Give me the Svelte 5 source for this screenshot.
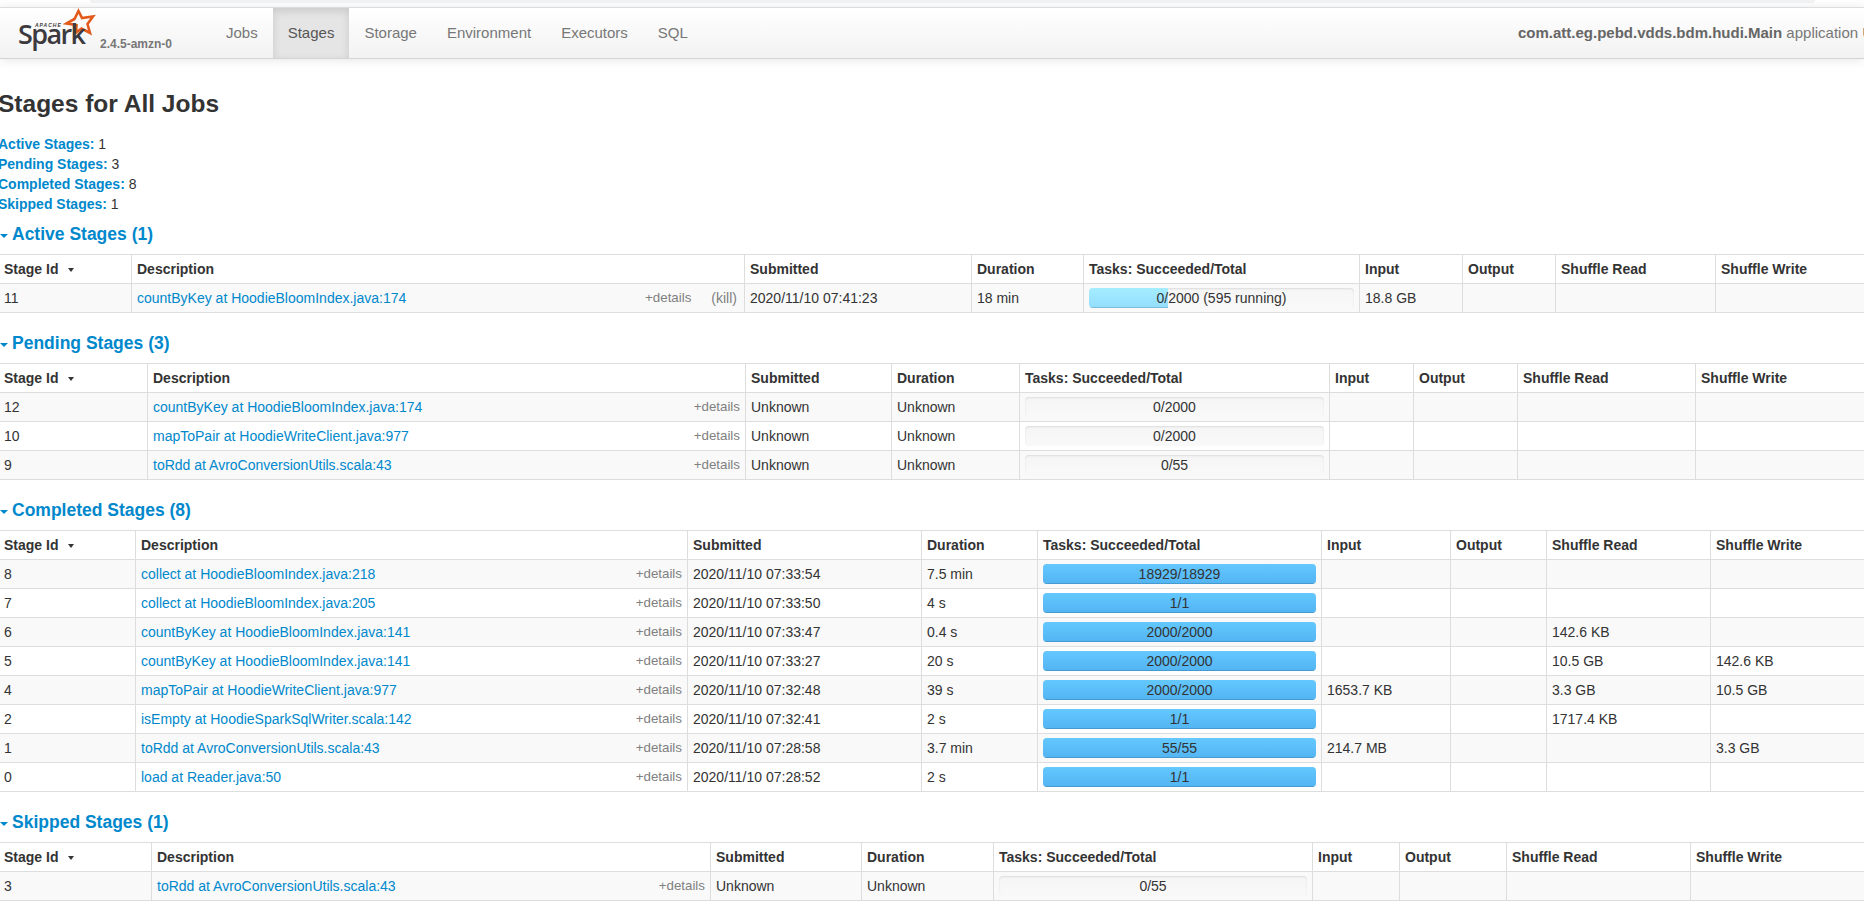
<script>
  const bounds = {
    active: [-2, 131, 744, 971, 1083, 1359, 1462, 1555, 1715, 1900],
    pending: [-2, 147, 745, 891, 1019, 1329, 1413, 1517, 1695, 1900],
    completed: [-2, 135, 687, 921, 1037, 1321, 1450, 1546, 1710, 1900],
    skipped: [-2, 151, 710, 861, 993, 1312, 1399, 1506, 1690, 1900]
  };
  const widths = (b) => b.slice(1).map((v, i) => v - b[i]);
  const row = (id, desc, sub, dur, done, total, input = '', read = '', write = '') => ({ id, desc, sub, dur, done, total, input, read, write });
  const sections = [
    { title: 'Active Stages', key: 'active', kill: true, rows: [
      { ...row('11', 'countByKey at HoodieBloomIndex.java:174', '2020/11/10 07:41:23', '18 min', 0, 2000, '18.8 GB'), running: 595 }
    ] },
    { title: 'Pending Stages', key: 'pending', rows: [
      row('12', 'countByKey at HoodieBloomIndex.java:174', 'Unknown', 'Unknown', 0, 2000),
      row('10', 'mapToPair at HoodieWriteClient.java:977', 'Unknown', 'Unknown', 0, 2000),
      row('9', 'toRdd at AvroConversionUtils.scala:43', 'Unknown', 'Unknown', 0, 55)
    ] },
    { title: 'Completed Stages', key: 'completed', rows: [
      row('8', 'collect at HoodieBloomIndex.java:218', '2020/11/10 07:33:54', '7.5 min', 18929, 18929),
      row('7', 'collect at HoodieBloomIndex.java:205', '2020/11/10 07:33:50', '4 s', 1, 1),
      row('6', 'countByKey at HoodieBloomIndex.java:141', '2020/11/10 07:33:47', '0.4 s', 2000, 2000, '', '142.6 KB'),
      row('5', 'countByKey at HoodieBloomIndex.java:141', '2020/11/10 07:33:27', '20 s', 2000, 2000, '', '10.5 GB', '142.6 KB'),
      row('4', 'mapToPair at HoodieWriteClient.java:977', '2020/11/10 07:32:48', '39 s', 2000, 2000, '1653.7 KB', '3.3 GB', '10.5 GB'),
      row('2', 'isEmpty at HoodieSparkSqlWriter.scala:142', '2020/11/10 07:32:41', '2 s', 1, 1, '', '1717.4 KB'),
      row('1', 'toRdd at AvroConversionUtils.scala:43', '2020/11/10 07:28:58', '3.7 min', 55, 55, '214.7 MB', '', '3.3 GB'),
      row('0', 'load at Reader.java:50', '2020/11/10 07:28:52', '2 s', 1, 1)
    ] },
    { title: 'Skipped Stages', key: 'skipped', rows: [
      row('3', 'toRdd at AvroConversionUtils.scala:43', 'Unknown', 'Unknown', 0, 55)
    ] }
  ];
  const heads = ['Description', 'Submitted', 'Duration', 'Tasks: Succeeded/Total', 'Input', 'Output', 'Shuffle Read', 'Shuffle Write'];
  const navs = ['Jobs', 'Stages', 'Storage', 'Environment', 'Executors', 'SQL'];
  const summary = [['Active Stages:', 1], ['Pending Stages:', 3], ['Completed Stages:', 8], ['Skipped Stages:', 1]];
</script>

<div class="strip"></div>
<header class="navbar">
  <div class="nav-left">
    <a class="brand" href="#top">
      <svg class="logo" viewBox="0 0 80 40" width="80" height="40" aria-label="Apache Spark">
        <polygon class="star" points="60.5,1 64,8 75,6.5 69.5,14 72,23 63.5,18.5 58,22.5 58.5,15 48.5,13.5 56.5,9" />
        <text class="apache" x="17" y="17">APACHE</text>
        <text class="spark" x="0" y="34">Spark</text>
      </svg>
      <span class="version">2.4.5-amzn-0</span>
    </a>
    <nav class="tabs">
      {#each navs as n}
        <a class="tab" class:active={n === 'Stages'} href="#top">{n}</a>
      {/each}
    </nav>
  </div>
  <p class="app-name"><strong>com.att.eg.pebd.vdds.bdm.hudi.Main</strong> application UI</p>
</header>

<main class="content">
  <h3>Stages for All Jobs</h3>
  <ul class="summary">
    {#each summary as [label, n]}
      <li><a href="#top"><strong>{label}</strong></a> {n}</li>
    {/each}
  </ul>

  {#each sections as s}
    <h4><span class="arrow-open"></span><a href="#top">{s.title} ({s.rows.length})</a></h4>
    <table style="width:{bounds[s.key][9] + 2}px">
      <colgroup>
        {#each widths(bounds[s.key]) as w}
          <col style="width:{w}px" />
        {/each}
      </colgroup>
      <thead>
        <tr>
          <th>Stage Id<span class="sort"></span></th>
          {#each heads as h}<th>{h}</th>{/each}
        </tr>
      </thead>
      <tbody>
        {#each s.rows as r}
          <tr>
            <td>{r.id}</td>
            <td>
              <a href="#top">{r.desc}</a>
              {#if s.kill}<span class="kill">(kill)</span>{/if}
              <span class="details">+details</span>
            </td>
            <td>{r.sub}</td>
            <td>{r.dur}</td>
            <td>
              <div class="progress">
                <span class="label">{r.done}/{r.total}{r.running ? ` (${r.running} running)` : ''}</span>
                {#if r.done > 0}
                  <div class="bar done" style="width:{(r.done / r.total) * 100}%"></div>
                {:else if r.running}
                  <div class="bar started" style="width:{(r.running / r.total) * 100}%"></div>
                {/if}
              </div>
            </td>
            <td>{r.input}</td>
            <td></td>
            <td>{r.read}</td>
            <td>{r.write}</td>
          </tr>
        {/each}
      </tbody>
    </table>
  {/each}
</main>

<style>
  :global(body) {
    margin: 0;
    background: #fff;
    overflow: hidden;
    font-family: "Liberation Sans", Arial, sans-serif;
    font-size: 14px;
    line-height: 20px;
    color: #333;
  }
  a { color: #0088cc; text-decoration: none; }
  .strip {
    height: 3px;
    margin: 0 49px 4px 90px;
    background: #f1f3f4;
    border-radius: 0 0 8px 8px;
  }
  .navbar {
    display: flex;
    height: 50px;
    overflow: hidden;
    border-top: 1px solid #ddd;
    border-bottom: 1px solid #d4d4d4;
    background: linear-gradient(to bottom, #ffffff, #f2f2f2);
    box-shadow: 0 1px 10px rgba(0, 0, 0, 0.1);
  }
  .nav-left { display: flex; flex: none; width: 1518px; }
  .brand { display: block; position: relative; flex: none; width: 211px; height: 50px; }
  .logo { position: absolute; left: 18px; top: 2px; overflow: visible; }
  .star { fill: none; stroke: #e25a1c; stroke-width: 2.6; }
  .spark {
    font-family: "Open Sans", sans-serif;
    font-size: 27px;
    font-weight: 600;
    letter-spacing: -1.6px;
    fill: #3c3a3e;
  }
  .apache {
    font-family: "Liberation Sans", sans-serif;
    font-size: 5px;
    font-weight: 700;
    font-style: italic;
    letter-spacing: 1px;
    fill: #3c3a3e;
  }
  .version {
    position: absolute;
    left: 100px;
    top: 26px;
    font-size: 12px;
    font-weight: 700;
    color: #777;
  }
  .tabs { display: flex; }
  .tab {
    padding: 0 15px;
    font-size: 15px;
    line-height: 50px;
    color: #777;
  }
  .tab.active {
    background: #e5e5e5;
    color: #555;
    box-shadow: inset 0 3px 8px rgba(0, 0, 0, 0.125);
  }
  .app-name {
    flex: none;
    margin: 0;
    font-size: 15px;
    line-height: 50px;
    white-space: nowrap;
    color: #777;
  }
  .app-name strong { color: #666; }
  .content { margin: 25px 0 0 -2px; }
  h3 { margin: 0 0 10px; font-size: 24.5px; line-height: 40px; font-weight: 700; }
  .summary { list-style: none; margin: 0 0 10px; padding: 0; }
  h4 { margin: 0 0 10px; font-size: 17.5px; line-height: 20px; font-weight: 700; }
  .arrow-open {
    display: inline-block;
    width: 0;
    height: 0;
    margin: 0 4px 2px 2px;
    border-left: 4px solid transparent;
    border-right: 4px solid transparent;
    border-top: 4px solid #0088cc;
  }
  table {
    table-layout: fixed;
    border-collapse: collapse;
    margin-bottom: 20px;
  }
  th, td {
    padding: 4px 5px;
    border: 1px solid #ddd;
    text-align: left;
    vertical-align: top;
    white-space: nowrap;
    overflow: hidden;
  }
  tbody tr:nth-child(odd) td { background: #f9f9f9; }
  .sort {
    display: inline-block;
    width: 0;
    height: 0;
    margin: 0 0 1px 10px;
    vertical-align: middle;
    border-left: 3px solid transparent;
    border-right: 3px solid transparent;
    border-top: 4px solid #333;
  }
  .details { float: right; font-size: 13.33px; color: #808080; }
  .kill { float: right; margin: 0 2px 0 20px; color: #808080; }
  .progress {
    position: relative;
    height: 20px;
    overflow: hidden;
    border-radius: 4px;
    background: linear-gradient(to bottom, #f5f5f5, #f9f9f9);
    box-shadow: inset 0 1px 2px rgba(0, 0, 0, 0.1);
    text-align: center;
  }
  .label { position: absolute; left: 0; right: 0; top: 0; z-index: 1; }
  .bar { height: 20px; box-shadow: inset 0 -1px 0 rgba(0, 0, 0, 0.15); }
  .done { background: linear-gradient(to bottom, #64c8ff, #52b4f2); }
  .started { background: linear-gradient(to bottom, #a4edff, #94ddff); }
</style>
